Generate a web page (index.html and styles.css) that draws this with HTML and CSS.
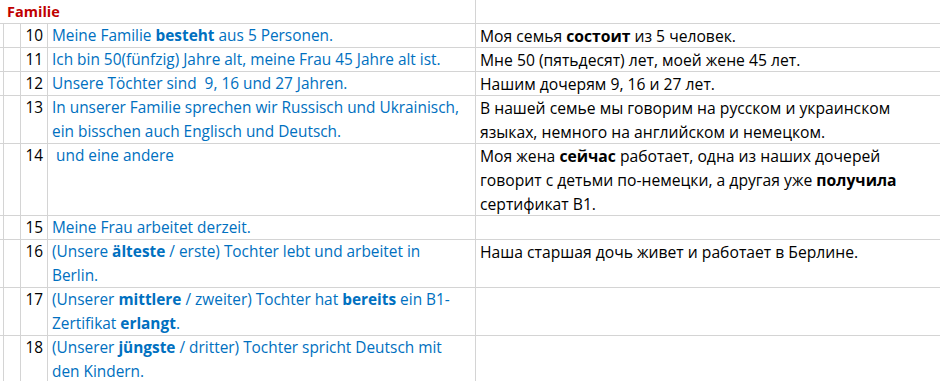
FILE: index.html
```html
<!DOCTYPE html>
<html lang="de">
<head>
<meta charset="utf-8">
<title>Familie</title>
<link rel="stylesheet" href="styles.css">
</head>
<body>
<div class="sheet">
  <div class="cell head">Familie</div>
  <div class="cell"></div>

  <div class="cell a"></div><div class="cell b"></div><div class="cell num">10</div>
  <div class="cell de">Meine Familie <b>besteht</b> aus 5 Personen.</div>
  <div class="cell ru">Моя семья <b>состоит</b> из 5 человек.</div>

  <div class="cell a"></div><div class="cell b"></div><div class="cell num">11</div>
  <div class="cell de">Ich bin 50(fünfzig) Jahre alt, meine Frau 45 Jahre alt ist.</div>
  <div class="cell ru">Мне 50 (пятьдесят) лет, моей жене 45 лет.</div>

  <div class="cell a"></div><div class="cell b"></div><div class="cell num">12</div>
  <div class="cell de">Unsere Töchter sind&nbsp; 9, 16 und 27 Jahren.</div>
  <div class="cell ru">Нашим дочерям 9, 16 и 27 лет.</div>

  <div class="cell a"></div><div class="cell b"></div><div class="cell num">13</div>
  <div class="cell de">In unserer Familie sprechen wir Russisch und Ukrainisch,<br>ein bisschen auch Englisch und Deutsch.</div>
  <div class="cell ru">В нашей семье мы говорим на русском и украинском<br>языках, немного на английском и немецком.</div>

  <div class="cell a"></div><div class="cell b"></div><div class="cell num">14</div>
  <div class="cell de">&nbsp;und eine andere</div>
  <div class="cell ru">Моя жена <b>сейчас</b> работает, одна из наших дочерей<br>говорит с детьми по-немецки, а другая уже <b>получила</b><br>сертификат B1.</div>

  <div class="cell a"></div><div class="cell b"></div><div class="cell num">15</div>
  <div class="cell de">Meine Frau arbeitet derzeit.</div>
  <div class="cell ru"></div>

  <div class="cell a"></div><div class="cell b"></div><div class="cell num">16</div>
  <div class="cell de">(Unsere <b>älteste</b> / erste) Tochter lebt und arbeitet in<br>Berlin.</div>
  <div class="cell ru">Наша старшая дочь живет и работает в Берлине.</div>

  <div class="cell a"></div><div class="cell b"></div><div class="cell num">17</div>
  <div class="cell de">(Unserer <b>mittlere</b> / zweiter) Tochter hat <b>bereits</b> ein B1-<br>Zertifikat <b>erlangt</b>.</div>
  <div class="cell ru"></div>

  <div class="cell a"></div><div class="cell b"></div><div class="cell num">18</div>
  <div class="cell de">(Unserer <b>jüngste</b> / dritter) Tochter spricht Deutsch mit<br>den Kindern.</div>
  <div class="cell ru"></div>
</div>
</body>
</html>
```

FILE: styles.css
```css
* { box-sizing: border-box; }

html, body {
  margin: 0;
  padding: 0;
  background: #ffffff;
  overflow: hidden;
}

.sheet {
  display: grid;
  grid-template-columns: 4px 17px 27px 428px 1fr;
  grid-template-rows: 24px 24px 24px 24px 48px 72px 24px 48px 48px 48px;
  width: 940px;
  font-family: "Open Sans", "Liberation Sans", sans-serif;
  font-size: 15.4px;
  line-height: 24px;
  color: #000000;
}

.cell {
  border-bottom: 1px solid #d4d4d4;
  border-right: 1px solid #d4d4d4;
  white-space: nowrap;
  overflow: visible;
}

.sheet > .cell:nth-child(2) { border-right: none; }

.head {
  grid-column: 1 / 5;
  color: #c00000;
  font-weight: bold;
  font-size: 14.5px;
  padding-left: 7px;
}

.num {
  text-align: right;
  padding-right: 4px;
}

.de {
  color: #0070c0;
  padding-left: 4px;
}

.ru {
  border-right: none;
  padding-left: 4px;
  font-size: 15.7px;
}

b { font-weight: bold; }
```
